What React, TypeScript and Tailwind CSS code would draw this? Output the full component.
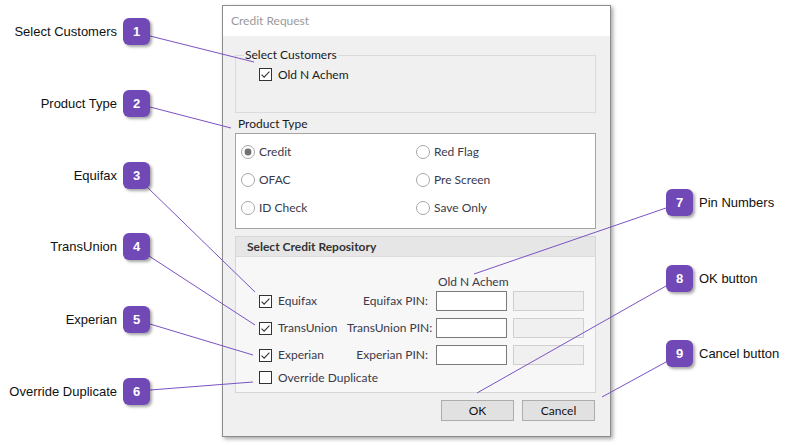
import React from 'react';

const Check = ({ checked }: { checked: boolean }) => (
  <svg width="13" height="13" viewBox="0 0 13 13" className="shrink-0 block">
    <rect x="0.5" y="0.5" width="12" height="12" fill="#fff" stroke="#333" />
    {checked && <path d="M2.6 6.6 L5.1 9.1 L10.4 3.6" fill="none" stroke="#333" strokeWidth="1.1" />}
  </svg>
);

const Radio = ({ on }: { on?: boolean }) => (
  <svg width="14" height="14" viewBox="0 0 14 14" className="shrink-0 block">
    <circle cx="7" cy="7" r="6.5" fill="#fff" stroke="#a6a6a6" />
    {on && <circle cx="7" cy="7" r="3.4" fill="#707070" />}
  </svg>
);

const Badge = ({ n }: { n: number }) => (
  <div className="w-[27px] h-[27px] rounded-[6px] bg-[#7049b7] text-white flex items-center justify-center font-bold text-[13px] shadow-[2px_2px_3px_rgba(0,0,0,0.35)] shrink-0">
    {n}
  </div>
);

const LeftCallout = ({ n, label, top }: { n: number; label: string; top: string }) => (
  <div className={`absolute left-0 w-[150px] flex items-center justify-end gap-[6px] ${top}`}>
    <span className="text-[13px] text-[#111] whitespace-nowrap">{label}</span>
    <Badge n={n} />
  </div>
);

const RightCallout = ({ n, label, top }: { n: number; label: string; top: string }) => (
  <div className={`absolute left-[666px] flex items-center gap-[6px] ${top}`}>
    <Badge n={n} />
    <span className="text-[13px] text-[#111] whitespace-nowrap">{label}</span>
  </div>
);

const RepoRow = ({ name, pin }: { name: string; pin: string }) => (
  <div className="flex items-center h-[20px]">
    <div className="w-[88px] flex items-center gap-[6px]">
      <Check checked />
      <span>{name}</span>
    </div>
    <div className="w-[81px] text-right whitespace-nowrap">{pin}</div>
    <div className="ml-[8px] w-[71px] h-[20px] bg-white border border-[#7a7a7a]" />
    <div className="ml-[6px] w-[71px] h-[20px] bg-[#f0f0f0] border border-[#cfcfcf]" />
  </div>
);

export default function App() {
  return (
    <div className="relative w-[795px] h-[446px] bg-white overflow-hidden font-['Liberation_Sans',Arial,sans-serif]">
      <div className="pt-[5px] pl-[222px]">
        <div className="w-[389px] h-[432px] border border-[#8c8c8c] bg-[#f0f0f0] shadow-[2px_2px_4px_rgba(0,0,0,0.35)] flex flex-col font-['Lato','Liberation_Sans',sans-serif] text-[12px] text-[#333]">
          <div className="h-[30px] bg-white flex items-center pl-[8px] text-[#9a9a9a] text-[12px]">Credit Request</div>
          <div className="pl-[12px] flex flex-col">
            <div className="relative mt-[19px] w-[361px] h-[58px] border border-[#dadada] pl-[23px] pt-[12px]">
              <span className="absolute left-[8px] top-[-8px] px-[1px] bg-[#f0f0f0] leading-[14px] text-[#1a1a1a]">Select Customers</span>
              <div className="flex items-center gap-[6px] h-[13px]">
                <Check checked />
                <span className="text-[#1a1a1a]">Old N Achem</span>
              </div>
            </div>
            <div className="h-[20px] pt-[3px] pl-[3px] leading-[16px] text-[#1a1a1a]">Product Type</div>
            <div className="w-[361px] h-[96px] bg-white border border-[#a3a3a3] pl-[5px] pt-[11px] grid grid-cols-[175px_1fr] gap-y-[14px] content-start text-[#3a3a4a]">
              <div className="flex items-center gap-[4px] h-[14px]"><Radio on /><span>Credit</span></div>
              <div className="flex items-center gap-[4px] h-[14px]"><Radio /><span>Red Flag</span></div>
              <div className="flex items-center gap-[4px] h-[14px]"><Radio /><span>OFAC</span></div>
              <div className="flex items-center gap-[4px] h-[14px]"><Radio /><span>Pre Screen</span></div>
              <div className="flex items-center gap-[4px] h-[14px]"><Radio /><span>ID Check</span></div>
              <div className="flex items-center gap-[4px] h-[14px]"><Radio /><span>Save Only</span></div>
            </div>
            <div className="mt-[7px] w-[361px] h-[157px] border border-[#d6d6d6] bg-[#f7f7f7] flex flex-col text-[#3a3a4a]">
              <div className="h-[20px] bg-[#e6e6e6] border-b border-[#dcdcdc] flex items-center pl-[11px] font-bold text-[#333] text-[12px]">Select Credit Repository</div>
              <div className="pl-[23px] pt-[18px] flex flex-col">
                <div className="h-[14px] leading-[14px] pl-[179px] whitespace-nowrap">Old N Achem</div>
                <div className="mt-[2px] flex flex-col gap-[7px]">
                  <RepoRow name="Equifax" pin="Equifax PIN:" />
                  <RepoRow name="TransUnion" pin="TransUnion PIN:" />
                  <RepoRow name="Experian" pin="Experian PIN:" />
                </div>
                <div className="mt-[6px] flex items-center gap-[6px] h-[13px]">
                  <Check checked={false} />
                  <span>Override Duplicate</span>
                </div>
              </div>
            </div>
            <div className="mt-[7px] w-[361px] flex justify-end gap-[8px] pr-[1px]">
              <div className="w-[73px] h-[21px] bg-[#e1e1e1] border border-[#adadad] flex items-center justify-center text-[#111]">OK</div>
              <div className="w-[73px] h-[21px] bg-[#e1e1e1] border border-[#adadad] flex items-center justify-center text-[#111]">Cancel</div>
            </div>
          </div>
        </div>
      </div>

      <svg className="absolute left-0 top-0 pointer-events-none" width="795" height="446" viewBox="0 0 795 446">
        <g stroke="#7b52c4" strokeWidth="1" fill="none">
          <line x1="150" y1="36" x2="254" y2="62" />
          <line x1="150" y1="107" x2="231" y2="128" />
          <line x1="147" y1="187" x2="255" y2="292" />
          <line x1="149" y1="256" x2="255" y2="325" />
          <line x1="150" y1="324" x2="253" y2="355" />
          <line x1="150" y1="390" x2="253" y2="382" />
          <line x1="666" y1="208" x2="474" y2="274" />
          <line x1="666" y1="286" x2="477" y2="393" />
          <line x1="666" y1="362" x2="602" y2="397" />
        </g>
      </svg>

      <LeftCallout n={1} label="Select Customers" top="top-[18px]" />
      <LeftCallout n={2} label="Product Type" top="top-[90px]" />
      <LeftCallout n={3} label="Equifax" top="top-[162px]" />
      <LeftCallout n={4} label="TransUnion" top="top-[233px]" />
      <LeftCallout n={5} label="Experian" top="top-[306px]" />
      <LeftCallout n={6} label="Override Duplicate" top="top-[378px]" />
      <RightCallout n={7} label="Pin Numbers" top="top-[189px]" />
      <RightCallout n={8} label="OK button" top="top-[265px]" />
      <RightCallout n={9} label="Cancel button" top="top-[340px]" />
    </div>
  );
}
